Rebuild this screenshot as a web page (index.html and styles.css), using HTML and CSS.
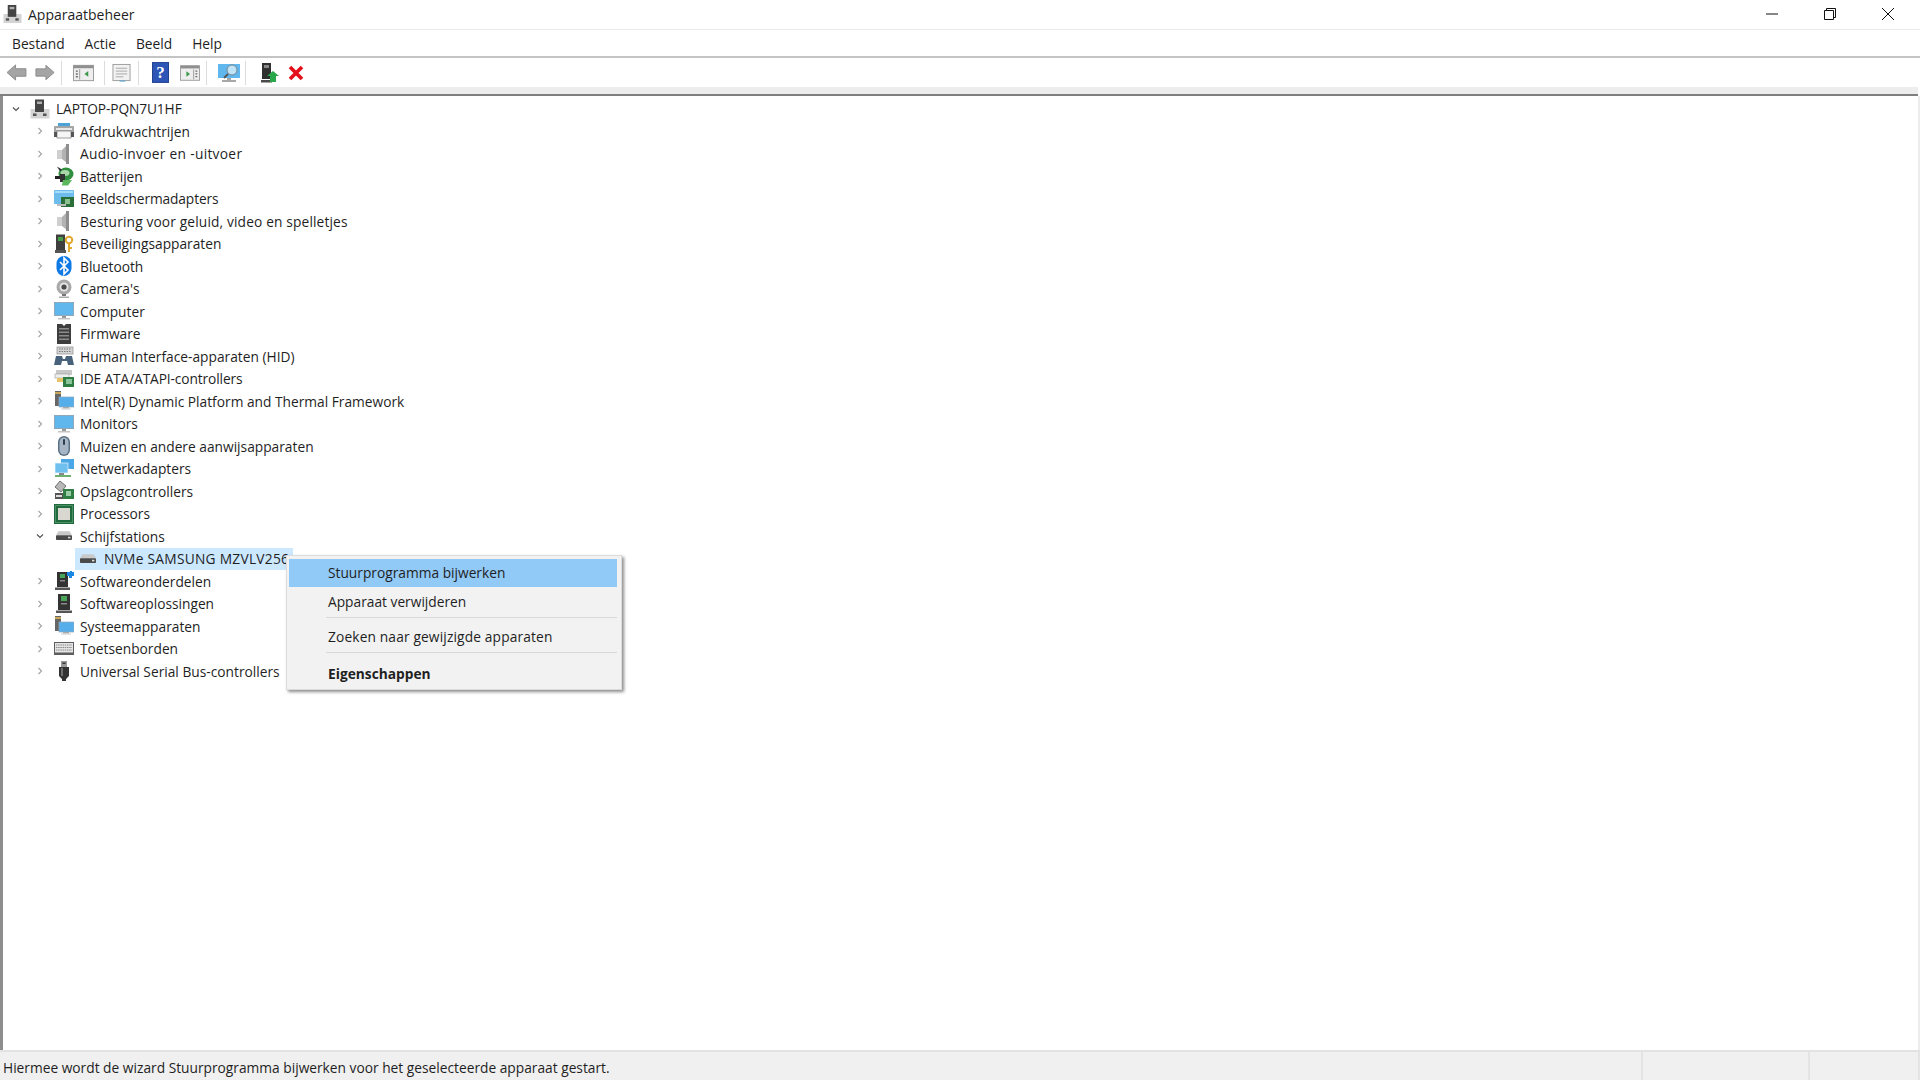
FILE: index.html
```html
<!DOCTYPE html>
<html lang="nl">
<head>
<meta charset="utf-8">
<title>Apparaatbeheer</title>
<link rel="stylesheet" href="styles.css">
</head>
<body>
<svg class="defs" width="0" height="0" aria-hidden="true">
  <defs>
    <symbol id="i-pc" viewBox="0 0 20 20">
      <rect x="5" y="0.5" width="9" height="11" fill="#444"/><rect x="7" y="2.5" width="5" height="2.500" fill="#b0b0b0"/>
      <rect x="0.5" y="10" width="19" height="9.500" fill="#d4d4d4"/><rect x="5" y="10" width="9" height="3" fill="#444"/>
      <rect x="3" y="14.5" width="3.500" height="2.500" fill="#555"/><rect x="13" y="14.5" width="3.500" height="2.500" fill="#555"/>
    </symbol>
    <symbol id="i-printer" viewBox="0 0 20 20">
      <rect x="4" y="2" width="12" height="3.500" fill="#4aa3d8"/><rect x="0" y="5" width="20" height="8" rx="1" fill="#a5a5a5"/>
      <rect x="2" y="7" width="16" height="2" fill="#e8e8e8"/><rect x="3" y="10" width="14" height="7" fill="#f6f6f6" stroke="#888" stroke-width=".8"/>
      <rect x="0" y="11" width="3" height="5" fill="#555"/><rect x="17" y="11" width="3" height="5" fill="#555"/>
    </symbol>
    <symbol id="i-speaker" viewBox="0 0 20 20">
      <path d="M3 6h5v9H3z" fill="#cfcfcf"/><path d="M8 6l5-5v18l-5-4z" fill="#b2b2b2"/><path d="M12 0h3v20h-3z" fill="#8e8e8e"/>
    </symbol>
    <symbol id="i-battery" viewBox="0 0 20 20">
      <ellipse cx="12" cy="8" rx="7.500" ry="6.500" fill="#2f8f3f"/><ellipse cx="11" cy="7" rx="4.500" ry="3" fill="#a8d8a8"/>
      <path d="M3 0.500l5 3-2 2z" fill="#333"/><path d="M1 10h8v3H1z" fill="#222"/><path d="M6 8h5v8H6z" fill="#333"/>
      <path d="M9 14h9l-4 5.500H8z" fill="#5cb85c"/>
    </symbol>
    <symbol id="i-display" viewBox="0 0 20 20">
      <rect x="0" y="1" width="20" height="14" rx="1" fill="#6dbdec"/><rect x="1" y="2" width="18" height="2" fill="#a6dcf7"/>
      <rect x="7" y="8" width="13" height="10" fill="#2a6e3a"/><rect x="11" y="10" width="5" height="5" fill="#8ac18f"/>
      <rect x="3" y="15" width="9" height="2" fill="#bbb"/>
    </symbol>
    <symbol id="i-security" viewBox="0 0 20 20">
      <rect x="2" y="0.500" width="9" height="15.500" fill="#3f3f3f"/><rect x="4" y="3" width="5" height="4" fill="#45a049"/>
      <rect x="1" y="16" width="11" height="3" fill="#555"/>
      <circle cx="15" cy="6" r="3.200" fill="none" stroke="#e0a82e" stroke-width="2"/><path d="M14 9h2v9h-2z" fill="#e0a82e"/><path d="M16 13h2v2h-2z" fill="#e0a82e"/>
    </symbol>
    <symbol id="i-bluetooth" viewBox="0 0 20 20">
      <rect x="2.500" y="0" width="15" height="20" rx="7.500" fill="#0f7ae5"/>
      <path d="M6 6l8 8-4 4V2l4 4-8 8" fill="none" stroke="#fff" stroke-width="1.600"/>
    </symbol>
    <symbol id="i-camera" viewBox="0 0 20 20">
      <circle cx="10" cy="8" r="7.500" fill="#a8a8a8"/><circle cx="10" cy="8" r="4.500" fill="#e4e4e4"/><circle cx="10" cy="8" r="2.600" fill="#4c4c4c"/>
      <path d="M8 15h4v2H8z" fill="#777"/><path d="M5 17.500h10V19H5z" fill="#aaa"/>
    </symbol>
    <symbol id="i-monitor" viewBox="0 0 20 20">
      <rect x="0" y="1" width="20" height="14" fill="#5fb7ee"/><rect x="0.500" y="1.500" width="19" height="13" fill="none" stroke="#8fa9bb"/>
      <rect x="8" y="15" width="4" height="2" fill="#9a9a9a"/><rect x="4" y="17" width="12" height="1.500" fill="#c4c4c4"/>
    </symbol>
    <symbol id="i-chip" viewBox="0 0 20 20">
      <path d="M3 0h5l2 2 2-2h5v20H3z" fill="#3e3e3e"/><path d="M5 4h10v1.500H5zM5 7.500h10V9H5zM5 11h10v1.500H5zM5 14.500h10V16H5z" fill="#8c8c8c"/>
    </symbol>
    <symbol id="i-hid" viewBox="0 0 20 20">
      <rect x="3" y="1" width="16" height="7" fill="#d4d4d4" stroke="#8c8c8c" stroke-width=".7"/><path d="M5 3h12M5 5.500h12" stroke="#777" stroke-dasharray="1.500 1"/>
      <path d="M0 19l2-9h6l1 3h2l1-3h6l2 9h-6l-1-4H8l-1 4z" fill="#47627a"/>
    </symbol>
    <symbol id="i-ide" viewBox="0 0 20 20">
      <rect x="2" y="1" width="16" height="5" fill="#c8c8c8"/><rect x="1" y="5" width="14" height="4" fill="#efefef" stroke="#999" stroke-width=".6"/>
      <rect x="9" y="8" width="11" height="10" fill="#2f7f45"/><rect x="12" y="10" width="6" height="5" fill="#8bc59a"/><rect x="3" y="9" width="6" height="4" fill="#e7c66a"/>
    </symbol>
    <symbol id="i-sys" viewBox="0 0 20 20">
      <rect x="1" y="0" width="6" height="15" fill="#666"/><rect x="1" y="1" width="6" height="2" fill="#c9a85a"/>
      <rect x="5" y="6" width="15" height="10" fill="#55aeea" stroke="#8fa9bb" stroke-width=".7"/>
      <rect x="9" y="16" width="6" height="1.500" fill="#aaa"/><rect x="7" y="17.500" width="10" height="1" fill="#ccc"/>
    </symbol>
    <symbol id="i-mouse" viewBox="0 0 20 20">
      <rect x="4" y="0" width="12" height="20" rx="6" fill="#5a6f85"/><rect x="5.500" y="1.500" width="9" height="17" rx="4.500" fill="#a6b6c6"/>
      <rect x="9" y="3" width="2" height="6" rx="1" fill="#2f3d4c"/>
    </symbol>
    <symbol id="i-net" viewBox="0 0 20 20">
      <rect x="7" y="0" width="13" height="10" fill="#4aa6e4"/><rect x="1" y="4" width="13" height="10" fill="#6fc0ef" stroke="#e8f4fb" stroke-width=".7"/>
      <rect x="5" y="14" width="5" height="2" fill="#888"/><rect x="1" y="16" width="16" height="2" fill="#6bb06f"/>
    </symbol>
    <symbol id="i-storage" viewBox="0 0 20 20">
      <path d="M6 0l6 5-5 6-6-5z" fill="#b8b8b8" stroke="#555" stroke-width=".8"/><rect x="1" y="12" width="11" height="6" fill="#555"/>
      <rect x="9" y="8" width="11" height="10" fill="#2f7f45"/><rect x="12" y="10" width="5" height="5" fill="#9bcda8"/><rect x="2" y="14" width="6" height="2" fill="#ddd"/>
    </symbol>
    <symbol id="i-cpu" viewBox="0 0 20 20">
      <rect x="0" y="0" width="20" height="20" fill="#1f6b3c"/><rect x="4" y="4" width="12" height="12" fill="#d8d8d0"/><rect x="1.500" y="1.500" width="17" height="17" fill="none" stroke="#7fb08e" stroke-dasharray="1 1"/>
    </symbol>
    <symbol id="i-drive" viewBox="0 0 20 12">
      <path d="M3 0h14l3 5H0z" fill="#c9c9c9"/><rect x="0" y="5" width="20" height="6" rx="1" fill="#4a4a4a"/><rect x="15" y="7" width="3" height="2" fill="#ddd"/>
    </symbol>
    <symbol id="i-soft" viewBox="0 0 20 20">
      <rect x="3" y="1" width="11" height="15" fill="#333"/><rect x="6" y="3" width="5" height="4" fill="#49a55a"/><rect x="6" y="9" width="5" height="1.500" fill="#888"/>
      <rect x="1" y="16.500" width="15" height="2.500" fill="#555"/><path d="M13 1h3V0h2v1h2v4h-2v2h-3V5h-2z" fill="#1b87e0"/>
    </symbol>
    <symbol id="i-solution" viewBox="0 0 20 20">
      <rect x="4" y="0" width="12" height="16" fill="#333"/><rect x="7" y="2" width="6" height="5" fill="#49a55a"/><rect x="7" y="9" width="6" height="1.500" fill="#888"/>
      <rect x="2" y="16.500" width="16" height="2.500" fill="#555"/>
    </symbol>
    <symbol id="i-keyboard" viewBox="0 0 20 20">
      <rect x="0" y="3" width="20" height="13" fill="#5d5d5d"/><rect x="1" y="4" width="18" height="9.500" fill="#e4e4e4"/>
      <path d="M2 6h16M2 8.500h16M2 11h16" stroke="#8a8a8a" stroke-width="1.200" stroke-dasharray="1.500 .7"/>
    </symbol>
    <symbol id="i-usb" viewBox="0 0 20 20">
      <rect x="7" y="0" width="6" height="6" fill="#9a9a9a"/><rect x="8.500" y="1.500" width="3" height="1.500" fill="#333"/>
      <path d="M5 6h10v9l-3 3v2H8v-2l-3-3z" fill="#333"/><path d="M7 7h2v8H7z" fill="#707070"/>
    </symbol>
    <symbol id="i-chev-r" viewBox="0 0 10 10"><path d="M3.500 2l3 3-3 3" fill="none" stroke="#a6a6a6" stroke-width="1.200"/></symbol>
    <symbol id="i-chev-d" viewBox="0 0 10 10"><path d="M2 3.500l3 3 3-3" fill="none" stroke="#555" stroke-width="1.200"/></symbol>
  </defs>
</svg>

<div class="window">
  <header class="titlebar">
    <svg class="title-icon"><use href="#i-pc"/></svg>
    <span class="title-text">Apparaatbeheer</span>
    <div class="winctrls">
      <svg class="winbtn" viewBox="0 0 14 14"><path d="M1 7h12" stroke="#111" fill="none"/></svg>
      <svg class="winbtn" viewBox="0 0 14 14"><path d="M1.500 3.500h9v9h-9zM3.500 3.500v-2h9v9h-2" stroke="#111" fill="none"/></svg>
      <svg class="winbtn" viewBox="0 0 14 14"><path d="M1 1l12 12M13 1L1 13" stroke="#111" fill="none"/></svg>
    </div>
  </header>

  <nav class="menubar">
    <span class="menu-item">Bestand</span>
    <span class="menu-item">Actie</span>
    <span class="menu-item">Beeld</span>
    <span class="menu-item">Help</span>
  </nav>

  <div class="toolbar">
    <svg class="tool tool-back" viewBox="0 0 22 18"><path d="M1 9l9-8v4h11v8H10v4z" fill="#a5a5a5" stroke="#8a8a8a"/></svg>
    <svg class="tool tool-fwd" viewBox="0 0 22 18"><path d="M21 9l-9-8v4H1v8h11v4z" fill="#a5a5a5" stroke="#8a8a8a"/></svg>
    <i class="tool-sep"></i>
    <svg class="tool tool-pane1" viewBox="0 0 22 18"><rect x=".5" y="1" width="21" height="16" fill="#eee" stroke="#999"/><rect x="1" y="1" width="20" height="3" fill="#8f8f8f"/><path d="M7 5v11" stroke="#999"/><path d="M16 7v6l-4-3z" fill="#3a9a4a"/><path d="M3 7h2M3 10h2M3 13h2" stroke="#666" stroke-width="1.500"/></svg>
    <i class="tool-sep tool-sep-a"></i>
    <svg class="tool tool-props" viewBox="0 0 20 20"><rect x="1" y="1" width="18" height="17" fill="#f2f2f2" stroke="#9c9c9c"/><path d="M4 5h12M4 8h12M4 11h12M4 14h8" stroke="#a8a8a8"/><path d="M8 18h6v1H8z" fill="#4aa3d8"/></svg>
    <i class="tool-sep tool-sep-b"></i>
    <svg class="tool tool-help" viewBox="0 0 18 22"><rect x=".5" y=".5" width="17" height="21" fill="#2d55b5" stroke="#1e3c8c"/><text x="9" y="17" class="help-q">?</text></svg>
    <svg class="tool tool-pane2" viewBox="0 0 22 18"><rect x=".5" y="1" width="21" height="16" fill="#eee" stroke="#999"/><rect x="1" y="1" width="20" height="3" fill="#8f8f8f"/><path d="M15 5v11" stroke="#999"/><path d="M7 7v6l4-3z" fill="#3a9a4a"/><path d="M17 7h2M17 10h2M17 13h2" stroke="#666" stroke-width="1.500"/></svg>
    <i class="tool-sep tool-sep-c"></i>
    <svg class="tool tool-scan" viewBox="0 0 22 20"><rect x="0" y="1" width="22" height="14" fill="#5fb7ee"/><path d="M9 15h4v2H9zM4 17h14v2H4z" fill="#a8a8a8"/><circle cx="14" cy="7" r="5" fill="#bfe3f7" stroke="#78858f"/><path d="M10 11l-4 4" stroke="#555" stroke-width="2"/></svg>
    <i class="tool-sep tool-sep-d"></i>
    <svg class="tool tool-update" viewBox="0 0 18 20"><rect x="1" y="0" width="9" height="16" fill="#2f2f2f"/><rect x="3" y="2" width="5" height="3" fill="#888"/><rect x="0" y="17" width="11" height="2.500" fill="#4a4a4a"/><path d="M12 8l6 5h-3v6H9v-6H6z" fill="#28a84a"/></svg>
    <svg class="tool tool-del" viewBox="0 0 16 16"><path d="M2 2l12 12M14 2L2 14" stroke="#e3101a" stroke-width="3.600"/></svg>
  </div>
  <div class="toolbar-edge"></div>

  <main class="tree">
    <div class="row row-root"><svg class="chev"><use href="#i-chev-d"/></svg><svg class="ico"><use href="#i-pc"/></svg><span class="lbl track-tight">LAPTOP-PQN7U1HF</span></div>
    <div class="row"><svg class="chev"><use href="#i-chev-r"/></svg><svg class="ico"><use href="#i-printer"/></svg><span class="lbl">Afdrukwachtrijen</span></div>
    <div class="row"><svg class="chev"><use href="#i-chev-r"/></svg><svg class="ico"><use href="#i-speaker"/></svg><span class="lbl track-wider">Audio-invoer en -uitvoer</span></div>
    <div class="row"><svg class="chev"><use href="#i-chev-r"/></svg><svg class="ico"><use href="#i-battery"/></svg><span class="lbl">Batterijen</span></div>
    <div class="row"><svg class="chev"><use href="#i-chev-r"/></svg><svg class="ico"><use href="#i-display"/></svg><span class="lbl track-tight">Beeldschermadapters</span></div>
    <div class="row"><svg class="chev"><use href="#i-chev-r"/></svg><svg class="ico"><use href="#i-speaker"/></svg><span class="lbl track-wide">Besturing voor geluid, video en spelletjes</span></div>
    <div class="row"><svg class="chev"><use href="#i-chev-r"/></svg><svg class="ico"><use href="#i-security"/></svg><span class="lbl">Beveiligingsapparaten</span></div>
    <div class="row"><svg class="chev"><use href="#i-chev-r"/></svg><svg class="ico"><use href="#i-bluetooth"/></svg><span class="lbl">Bluetooth</span></div>
    <div class="row"><svg class="chev"><use href="#i-chev-r"/></svg><svg class="ico"><use href="#i-camera"/></svg><span class="lbl">Camera's</span></div>
    <div class="row"><svg class="chev"><use href="#i-chev-r"/></svg><svg class="ico"><use href="#i-monitor"/></svg><span class="lbl">Computer</span></div>
    <div class="row"><svg class="chev"><use href="#i-chev-r"/></svg><svg class="ico"><use href="#i-chip"/></svg><span class="lbl">Firmware</span></div>
    <div class="row"><svg class="chev"><use href="#i-chev-r"/></svg><svg class="ico"><use href="#i-hid"/></svg><span class="lbl">Human Interface-apparaten (HID)</span></div>
    <div class="row"><svg class="chev"><use href="#i-chev-r"/></svg><svg class="ico"><use href="#i-ide"/></svg><span class="lbl track-tight">IDE ATA/ATAPI-controllers</span></div>
    <div class="row"><svg class="chev"><use href="#i-chev-r"/></svg><svg class="ico"><use href="#i-sys"/></svg><span class="lbl">Intel(R) Dynamic Platform and Thermal Framework</span></div>
    <div class="row"><svg class="chev"><use href="#i-chev-r"/></svg><svg class="ico"><use href="#i-monitor"/></svg><span class="lbl">Monitors</span></div>
    <div class="row"><svg class="chev"><use href="#i-chev-r"/></svg><svg class="ico"><use href="#i-mouse"/></svg><span class="lbl">Muizen en andere aanwijsapparaten</span></div>
    <div class="row"><svg class="chev"><use href="#i-chev-r"/></svg><svg class="ico"><use href="#i-net"/></svg><span class="lbl">Netwerkadapters</span></div>
    <div class="row"><svg class="chev"><use href="#i-chev-r"/></svg><svg class="ico"><use href="#i-storage"/></svg><span class="lbl">Opslagcontrollers</span></div>
    <div class="row"><svg class="chev"><use href="#i-chev-r"/></svg><svg class="ico"><use href="#i-cpu"/></svg><span class="lbl">Processors</span></div>
    <div class="row"><svg class="chev"><use href="#i-chev-d"/></svg><svg class="ico ico-drive"><use href="#i-drive"/></svg><span class="lbl">Schijfstations</span></div>
    <div class="row row-sel"><svg class="ico ico-drive"><use href="#i-drive"/></svg><span class="lbl">NVMe SAMSUNG MZVLV256</span></div>
    <div class="row"><svg class="chev"><use href="#i-chev-r"/></svg><svg class="ico"><use href="#i-soft"/></svg><span class="lbl">Softwareonderdelen</span></div>
    <div class="row"><svg class="chev"><use href="#i-chev-r"/></svg><svg class="ico"><use href="#i-solution"/></svg><span class="lbl">Softwareoplossingen</span></div>
    <div class="row"><svg class="chev"><use href="#i-chev-r"/></svg><svg class="ico"><use href="#i-sys"/></svg><span class="lbl">Systeemapparaten</span></div>
    <div class="row"><svg class="chev"><use href="#i-chev-r"/></svg><svg class="ico"><use href="#i-keyboard"/></svg><span class="lbl">Toetsenborden</span></div>
    <div class="row"><svg class="chev"><use href="#i-chev-r"/></svg><svg class="ico"><use href="#i-usb"/></svg><span class="lbl">Universal Serial Bus-controllers</span></div>
  </main>

  <footer class="statusbar">
    <div class="status-main">Hiermee wordt de wizard Stuurprogramma bijwerken voor het geselecteerde apparaat gestart.</div>
    <div class="status-cell status-cell-a"></div>
    <div class="status-cell status-cell-b"></div>
  </footer>

  <div class="ctx">
    <div class="ctx-item ctx-hot">Stuurprogramma bijwerken</div>
    <div class="ctx-item ctx-second">Apparaat verwijderen</div>
    <div class="ctx-sep"></div>
    <div class="ctx-item track-wide">Zoeken naar gewijzigde apparaten</div>
    <div class="ctx-sep"></div>
    <div class="ctx-item ctx-bold">Eigenschappen</div>
  </div>
</div>
</body>
</html>
```
FILE: styles.css
```css
* { box-sizing: border-box; }
html, body { margin: 0; height: 100%; }
body { font-family: "Open Sans", "Noto Sans", sans-serif; font-size: 13.75px; color: #1f1f1f; background: #fff; overflow: hidden; }
.defs { position: absolute; }
.window { position: relative; width: 1920px; height: 1080px; display: flex; flex-direction: column; }
.track-wide { letter-spacing: .14px; }
.track-wider { letter-spacing: .3px; }
.track-tight { letter-spacing: -.12px; }

.titlebar { height: 30px; flex: none; display: flex; align-items: center; padding: 0 0 1px 3px; border-bottom: 1px solid #ececec; }
.title-icon { width: 19px; height: 20px; }
.title-text { margin-left: 6px; font-size: 14px; }
.winctrls { margin-left: auto; display: flex; }
.winbtn { width: 14px; height: 14px; margin-right: 44px; }
.winbtn:last-child { margin-right: 25px; }

.menubar { height: 28px; flex: none; display: flex; align-items: center; border-bottom: 2px solid #c4c4c4; padding-left: 12px; }
.menu-item { margin-right: 20px; }

.toolbar { height: 29px; flex: none; display: flex; align-items: center; padding-left: 6px; }
.tool { display: block; flex: none; }
.tool-back { width: 21px; height: 17px; }
.tool-fwd { width: 20px; height: 17px; margin-left: 8px; }
.tool-sep { width: 1px; height: 24px; background: #dcdcdc; margin: 0 11px 0 6px; flex: none; }
.tool-pane1 { width: 21px; height: 18px; }
.tool-sep-a { margin: 0 7px 0 10px; }
.tool-props { width: 19px; height: 20px; }
.tool-sep-b { margin: 0 13px 0 7px; }
.tool-help { width: 17px; height: 21px; }
.tool-pane2 { width: 20px; height: 18px; margin-left: 11px; }
.tool-sep-c { margin: 0 11px 0 6px; }
.tool-scan { width: 22px; height: 20px; }
.tool-sep-d { margin: 0 15px 0 5px; }
.tool-update { width: 18px; height: 20px; }
.tool-del { width: 16px; height: 16px; margin-left: 9px; }
.help-q { font-family: "Liberation Serif", serif; font-size: 18px; font-weight: 700; fill: #fff; text-anchor: middle; }

.toolbar-edge { height: 9px; flex: none; background: #ededed; border-bottom: 2px solid #7f7f7f; margin-right: 2px; }

.tree { flex: 1; min-height: 0; padding-top: 1.5px; border-left: 3px solid #8e8e8e; border-right: 2px solid #ececec; }
.row { height: 22.5px; display: flex; align-items: center; padding-left: 32px; white-space: nowrap; }
.row-root { padding-left: 8px; }
.chev { width: 10px; height: 10px; flex: none; }
.ico { width: 20px; height: 20px; flex: none; margin-left: 9px; }
.ico-drive { width: 16px; height: 10px; margin: 0 2px 0 11px; }
.lbl { margin-left: 6px; }
.row-sel { width: 218px; margin-left: 72px; padding-left: 5px; background: #cce8ff; }
.row-sel .ico { margin: 0; }
.row-sel .lbl { margin-left: 8px; letter-spacing: .26px; }

.statusbar { height: 30px; flex: none; display: flex; background: #f0f0f0; border-top: 2px solid #e2e2e2; }
.status-main { width: 1643px; padding: 6px 0 0 3px; border-right: 2px solid #e4e4e4; }
.status-cell-a { width: 167px; border-right: 2px solid #e4e4e4; }
.status-cell-b { flex: 1; border-right: 2px solid #e4e4e4; }

.ctx { position: absolute; left: 286px; top: 555px; width: 336px; height: 135px; padding: 3px 4px 0 2px; background: #f2f2f2; border: 1px solid #dcdcdc; box-shadow: 2px 2px 3px rgba(0,0,0,.45); }
.ctx-item { height: 27px; line-height: 27px; padding-left: 39px; white-space: nowrap; }
.ctx-hot { height: 28px; line-height: 28px; background: #91c9f7; }
.ctx-second { margin-top: 1px; }
.ctx-sep { height: 1px; margin: 2px 0 5px 37px; background: #d9d9d9; }
.ctx-bold { font-weight: 700; margin-top: 7px; }
```
